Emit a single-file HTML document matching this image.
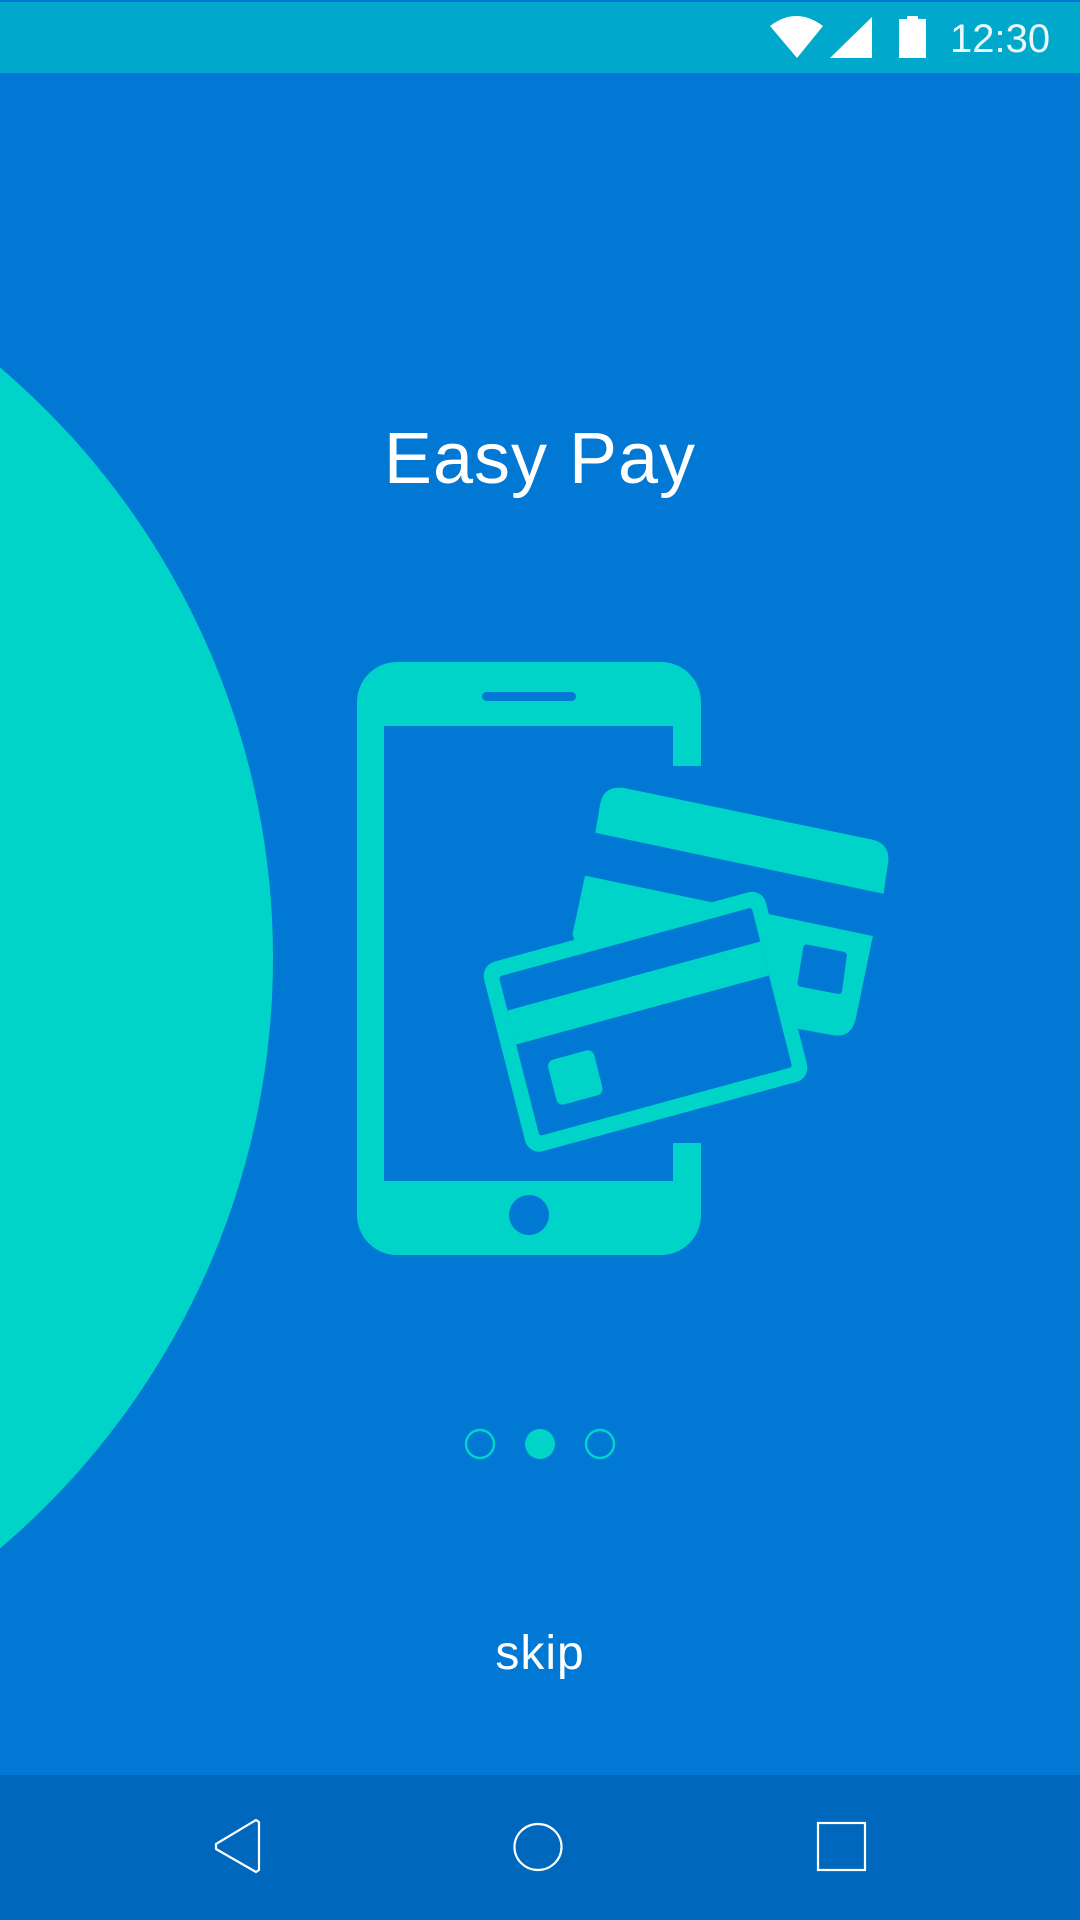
<!DOCTYPE html>
<html><head><meta charset="utf-8"><style>
html,body{margin:0;padding:0;width:1080px;height:1920px;overflow:hidden;background:#0078d4;}
svg{position:absolute;left:0;top:0}
.t{font-family:"Liberation Sans",sans-serif;fill:#fff}
</style></head><body>
<svg width="1080" height="1920" viewBox="0 0 1080 1920">
<rect x="0" y="0" width="1080" height="1920" fill="#0078d4"/>
<circle cx="-502" cy="958" r="775" fill="#00d4c8"/>
<!-- status bar -->
<rect x="0" y="0" width="1080" height="2" fill="#0078d4"/>
<rect x="0" y="2" width="1080" height="71" fill="#00a8cc"/>
<path d="M770 26 Q796 6 823 26 L797 58 Z" fill="#fff"/>
<path d="M830 58 L872 17 L872 58 Z" fill="#fff"/>
<rect x="899" y="19" width="27" height="39" fill="#fff"/>
<rect x="907" y="16" width="11" height="4" fill="#fff"/>
<text x="950" y="52" class="t" font-size="40" fill-opacity="0.92">12:30</text>
<!-- title -->
<text x="540" y="483" class="t" font-size="72" text-anchor="middle" letter-spacing="1">Easy Pay</text>
<!-- phone -->
<rect x="357" y="662" width="344" height="593" rx="40" fill="#00d4c8"/>
<rect x="384" y="726" width="289" height="455" fill="#0078d4"/>
<rect x="672" y="766" width="32" height="377" fill="#0078d4"/>
<rect x="482" y="692" width="94" height="9" rx="4.5" fill="#0078d4"/>
<circle cx="529" cy="1215" r="20" fill="#0078d4"/>
<!-- cards -->
<g transform="translate(340 640) scale(0.35714 0.36996)">
<path d="M715,521 L728,445 Q738,392 795,400 L1492,540 Q1540,552 1535,600 L1522,686 Z" fill="#00d4c8"/>
<path d="M686,637 L1492,800 L1445,1020 Q1432,1078 1380,1068 L700,950 L651,795 Z" fill="#00d4c8"/>
<polygon points="1306,832 1410,852 1397,948 1290,928" fill="#0078d4" stroke="#0078d4" stroke-width="18" stroke-linejoin="round"/>
<g transform="translate(855 1030) rotate(-14.75)">
<rect x="-408" y="-263" width="816" height="530" rx="40" fill="#00d4c8"/>
<rect x="-366" y="-221" width="732" height="446" rx="8" fill="#0078d4"/>
<rect x="-366" y="-126" width="732" height="95" fill="#00d4c8"/>
<rect x="-295" y="35" width="133" height="125" rx="18" fill="#00d4c8"/>
</g>
</g>
<!-- dots -->
<circle cx="480" cy="1444" r="14" fill="none" stroke="#00d4c8" stroke-width="2.5"/>
<circle cx="540" cy="1444" r="15" fill="#00d4c8"/>
<circle cx="600" cy="1444" r="14" fill="none" stroke="#00d4c8" stroke-width="2.5"/>
<!-- skip -->
<text x="540" y="1669" class="t" font-size="48" text-anchor="middle" letter-spacing="1">skip</text>
<!-- nav -->
<rect x="0" y="1775" width="1080" height="145" fill="#0068bc"/>
<path d="M256 1820 L259 1822 L259 1870 L256 1872 L216 1849 L216 1844 Z" fill="none" stroke="#fff" stroke-width="2.2" stroke-linejoin="round"/>
<ellipse cx="538" cy="1847" rx="23.5" ry="23" fill="none" stroke="#fff" stroke-width="2.2"/>
<rect x="818" y="1823" width="47" height="47" fill="none" stroke="#fff" stroke-width="2.2"/>
</svg>
</body></html>
